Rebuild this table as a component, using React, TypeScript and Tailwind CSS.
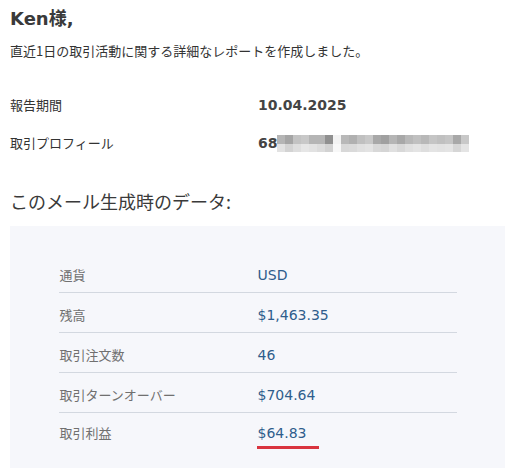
import React from "react";

const topRow = ["#b5b5b5","#a5a5a5","#c3c3c3","#c8c8c8","#b5b5b5","#b5b5b5","#909090","#f3f3f3","#b8b8b8","#b0b0b0","#c0c0c0","#c8c8c8","#a8a8a8","#a0a0a0","#b5b5b5","#a8a8a8","#b8b8b8","#c0c0c0","#b8b8b8","#c5c5c5","#c0c0c0","#c5c5c5","#a8a8a8","#c8c8c8"];
const botRow = ["#e2e2e2","#d3d3d3","#dedede","#e6e6e6","#e2e2e2","#dcdcdc","#d2d2d2","#f8f8f8","#d8d8d8","#dadada","#e0e0e0","#e3e3e3","#d8d8d8","#d5d5d5","#e0e0e0","#d8d8d8","#e0e0e0","#e4e4e4","#dedede","#e4e4e4","#e2e2e2","#e4e4e4","#d6d6d6","#e4e4e4"];

const rows: { label: string; value: string; last?: boolean }[] = [
  { label: "通貨", value: "USD" },
  { label: "残高", value: "$1,463.35" },
  { label: "取引注文数", value: "46" },
  { label: "取引ターンオーバー", value: "$704.64" },
  { label: "取引利益", value: "$64.83", last: true },
];

const jp = "font-['Noto_Sans_CJK_JP',sans-serif]";
const lat = "font-['DejaVu_Sans','Noto_Sans_CJK_JP',sans-serif]";

export default function App() {
  return (
    <div className={`w-[513px] h-[468px] overflow-hidden bg-white text-[#333] ${jp}`}>
      <div className="pl-[10px] pt-[5px]">
        <div className="text-[18px] leading-[24px] font-bold text-[#3a3a3a]">
          <span className={lat}>Ken</span>様<span className={lat}>,</span>
        </div>
        <div className="mt-[11px] text-[13px] leading-[18px] text-[#333]">
          直近1日の取引活動に関する詳細なレポートを作成しました。
        </div>
        <div className="mt-[36px] flex items-center text-[13px] leading-[18px]">
          <div className="w-[248px] text-[#333]">報告期間</div>
          <div className={`${lat} font-bold text-[14px] text-[#444]`}>10.04.2025</div>
        </div>
        <div className="mt-[20px] flex items-center text-[13px] leading-[18px]">
          <div className="w-[248px] text-[#333]">取引プロフィール</div>
          <div className="flex items-center">
            <span className={`${lat} font-bold text-[14px] text-[#444]`}>68</span>
            <div className="flex flex-col">
              <div className="flex">
                {topRow.map((c, i) => (
                  <div key={i} className="w-[8px] h-[9px]" style={{ backgroundColor: c }} />
                ))}
              </div>
              <div className="flex">
                {botRow.map((c, i) => (
                  <div key={i} className="w-[8px] h-[8px]" style={{ backgroundColor: c }} />
                ))}
              </div>
            </div>
          </div>
        </div>
        <div className="mt-[37px] text-[18px] leading-[24px] text-[#3a3a3a]">
          このメール生成時のデータ:
        </div>
      </div>
      <div className="ml-[10px] mt-[13px] w-[495px] bg-[#f6f7fb] pt-[27px] pb-[30px]">
        <div className="mx-auto w-[398px]">
          {rows.map((r) => (
            <div
              key={r.label}
              className={`flex items-start text-[13px] leading-[16px] ${r.last ? "pt-[12px]" : "pt-[14px] pb-[9px] border-b border-[#d3d8e0]"}`}
            >
              <div className="w-[199px] pl-[1px] text-[#707070]">{r.label}</div>
              <div className={`${lat} text-[14px] text-[#2f5d8c]`}>
                {r.last ? (
                  <span className="inline-block w-[62px] border-b-[3px] border-[#d9343f] pb-[5px] -ml-[1px] pl-[1px]">
                    {r.value}
                  </span>
                ) : (
                  r.value
                )}
              </div>
            </div>
          ))}
        </div>
      </div>
    </div>
  );
}
